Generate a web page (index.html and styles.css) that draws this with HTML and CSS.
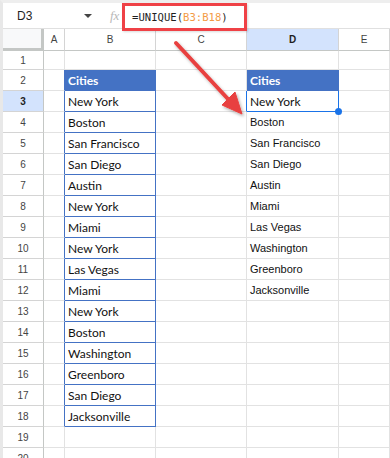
FILE: index.html
```html
<!DOCTYPE html>
<html lang="en">
<head>
  <meta charset="UTF-8" />
  <title>UNIQUE function</title>
  <link rel="stylesheet" href="styles.css">
</head>
<body>
  <div class="sheet">
    <div class="formula-bar">
      <div class="name-box">
        <span class="cell-ref">D3</span>
        <span class="caret"></span>
      </div>
      <span class="fx">fx</span>
      <div class="formula">=UNIQUE(<span class="range">B3:B18</span>)</div>
    </div>

    <div class="grid">
      <div class="corner"></div>
      <div class="col-head">A</div>
      <div class="col-head">B</div>
      <div class="col-head">C</div>
      <div class="col-head active">D</div>
      <div class="col-head">E</div>

      <div class="row-head">1</div><div class="cell"></div><div class="cell"></div><div class="cell"></div><div class="cell"></div><div class="cell"></div>

      <div class="row-head">2</div><div class="cell edge"></div><div class="cell head">Cities</div><div class="cell"></div><div class="cell head">Cities</div><div class="cell"></div>
      <div class="row-head active">3</div><div class="cell edge"></div><div class="cell list">New York</div><div class="cell sel-edge"></div><div class="cell picked">New York<span class="handle"></span></div><div class="cell"></div>
      <div class="row-head">4</div><div class="cell edge"></div><div class="cell list">Boston</div><div class="cell"></div><div class="cell plain">Boston</div><div class="cell"></div>
      <div class="row-head">5</div><div class="cell edge"></div><div class="cell list">San Francisco</div><div class="cell"></div><div class="cell plain">San Francisco</div><div class="cell"></div>
      <div class="row-head">6</div><div class="cell edge"></div><div class="cell list">San Diego</div><div class="cell"></div><div class="cell plain">San Diego</div><div class="cell"></div>
      <div class="row-head">7</div><div class="cell edge"></div><div class="cell list">Austin</div><div class="cell"></div><div class="cell plain">Austin</div><div class="cell"></div>
      <div class="row-head">8</div><div class="cell edge"></div><div class="cell list">New York</div><div class="cell"></div><div class="cell plain">Miami</div><div class="cell"></div>
      <div class="row-head">9</div><div class="cell edge"></div><div class="cell list">Miami</div><div class="cell"></div><div class="cell plain">Las Vegas</div><div class="cell"></div>
      <div class="row-head">10</div><div class="cell edge"></div><div class="cell list">New York</div><div class="cell"></div><div class="cell plain">Washington</div><div class="cell"></div>
      <div class="row-head">11</div><div class="cell edge"></div><div class="cell list">Las Vegas</div><div class="cell"></div><div class="cell plain">Greenboro</div><div class="cell"></div>
      <div class="row-head">12</div><div class="cell edge"></div><div class="cell list">Miami</div><div class="cell"></div><div class="cell plain">Jacksonville</div><div class="cell"></div>
      <div class="row-head">13</div><div class="cell edge"></div><div class="cell list">New York</div><div class="cell"></div><div class="cell"></div><div class="cell"></div>
      <div class="row-head">14</div><div class="cell edge"></div><div class="cell list">Boston</div><div class="cell"></div><div class="cell"></div><div class="cell"></div>
      <div class="row-head">15</div><div class="cell edge"></div><div class="cell list">Washington</div><div class="cell"></div><div class="cell"></div><div class="cell"></div>
      <div class="row-head">16</div><div class="cell edge"></div><div class="cell list">Greenboro</div><div class="cell"></div><div class="cell"></div><div class="cell"></div>
      <div class="row-head">17</div><div class="cell edge"></div><div class="cell list">San Diego</div><div class="cell"></div><div class="cell"></div><div class="cell"></div>
      <div class="row-head">18</div><div class="cell edge"></div><div class="cell list">Jacksonville</div><div class="cell"></div><div class="cell"></div><div class="cell"></div>
      <div class="row-head">19</div><div class="cell"></div><div class="cell"></div><div class="cell"></div><div class="cell"></div><div class="cell"></div>
      <div class="row-head">20</div><div class="cell"></div><div class="cell"></div><div class="cell"></div><div class="cell"></div><div class="cell"></div>
    </div>

    <!-- annotation arrow from the formula to the result -->
    <svg class="arrow" width="390" height="458" viewBox="0 0 390 458">
      <defs>
        <filter id="shadow" x="-20%" y="-20%" width="140%" height="140%">
          <feDropShadow dx="1.5" dy="2" stdDeviation="1.5" flood-color="#000" flood-opacity="0.3"/>
        </filter>
      </defs>
      <g filter="url(#shadow)" fill="#e8413f" stroke="#e8413f">
        <line x1="176" y1="43" x2="228" y2="99" stroke-width="4" stroke-linecap="round"/>
        <polygon points="242,114 222,105 235,92" stroke-width="1" stroke-linejoin="round"/>
      </g>
    </svg>
  </div>
</body>
</html>
```

FILE: styles.css
```css
* {
  box-sizing: border-box;
}

body {
  margin: 0;
  background: #fff;
  font-family: "Liberation Sans", Arial, sans-serif;
  overflow: hidden;
}

.sheet {
  position: relative;
  width: 390px;
  height: 458px;
  overflow: hidden;
  border-top: 3px solid #eeeeee;
  border-left: 3px solid #e8e8e8;
}

/* formula bar */
.formula-bar {
  position: relative;
  z-index: 2;
  display: flex;
  align-items: flex-start;
  height: 26px;
  border-bottom: 1px solid #e0e0e0;
}

.name-box {
  display: flex;
  align-items: center;
  width: 97px;
  height: 25px;
  padding-left: 14px;
}

.cell-ref {
  font-size: 12px;
  color: #1f1f1f;
}

.caret {
  margin-left: auto;
  margin-right: 8px;
  width: 0;
  height: 0;
  border-left: 4px solid transparent;
  border-right: 4px solid transparent;
  border-top: 4px solid #444;
}

.fx {
  width: 22px;
  height: 25px;
  padding-left: 10px;
  line-height: 25px;
  font-family: "Liberation Serif", serif;
  font-style: italic;
  font-size: 13px;
  color: #b8b8b8;
}

.formula {
  width: 125px;
  height: 28px;
  padding-left: 7px;
  border: 3px solid #ef4146;
  background: #fff;
  font-family: "DejaVu Sans Mono", monospace;
  font-size: 10.6px;
  line-height: 22px;
  color: #1f1f1f;
  box-shadow: 1px 1px 2px rgba(0, 0, 0, 0.15);
}

.range {
  color: #f39a45;
}

/* grid */
.grid {
  display: grid;
  grid-template-columns: 41px 21px 91px 91px 92px 1fr;
  grid-template-rows: 22px 19px repeat(19, 21px);
}

.grid > div {
  border-right: 1px solid #e2e2e2;
  border-bottom: 1px solid #e2e2e2;
}

.corner {
  background: #f8f9fa;
  border-right: 3px solid #c4c7c5 !important;
  border-bottom: 3px solid #c4c7c5 !important;
}

.col-head,
.row-head {
  display: flex;
  align-items: center;
  justify-content: center;
  font-size: 10px;
  color: #444;
}

.col-head {
  border-right-color: #d4d4d4 !important;
  border-bottom-color: #c4c7c5 !important;
}

.row-head {
  border-right-color: #c4c7c5 !important;
  border-bottom-color: #d4d4d4 !important;
}

.col-head.active,
.row-head.active {
  background: #d3e3fd;
  font-weight: bold;
  color: #1f1f1f;
}

.cell {
  position: relative;
  display: flex;
  align-items: center;
  padding: 0 3px;
  white-space: nowrap;
  color: #111;
}

.edge {
  border-right-color: #4472c4 !important;
}

.head {
  background: #4472c4;
  border-right-color: #4472c4 !important;
  border-bottom-color: #4472c4 !important;
  font-family: Lato, "Open Sans", sans-serif;
  font-weight: bold;
  font-size: 12px;
  color: #fff;
}

.list {
  border-right-color: #4472c4 !important;
  border-bottom-color: #4472c4 !important;
  font-family: Lato, "Open Sans", sans-serif;
  font-size: 12px;
}

.plain {
  font-size: 11px;
}

.sel-edge {
  border-right-color: #1a73e8 !important;
}

.picked {
  border-right-color: #1a73e8 !important;
  border-bottom-color: #1a73e8 !important;
  font-family: Lato, "Open Sans", sans-serif;
  font-size: 12px;
}

.handle {
  position: absolute;
  right: -4px;
  bottom: -4px;
  z-index: 1;
  width: 7px;
  height: 7px;
  border-radius: 50%;
  background: #1a73e8;
}

.arrow {
  position: absolute;
  top: -3px;
  left: -3px;
  z-index: 3;
  pointer-events: none;
}
```
